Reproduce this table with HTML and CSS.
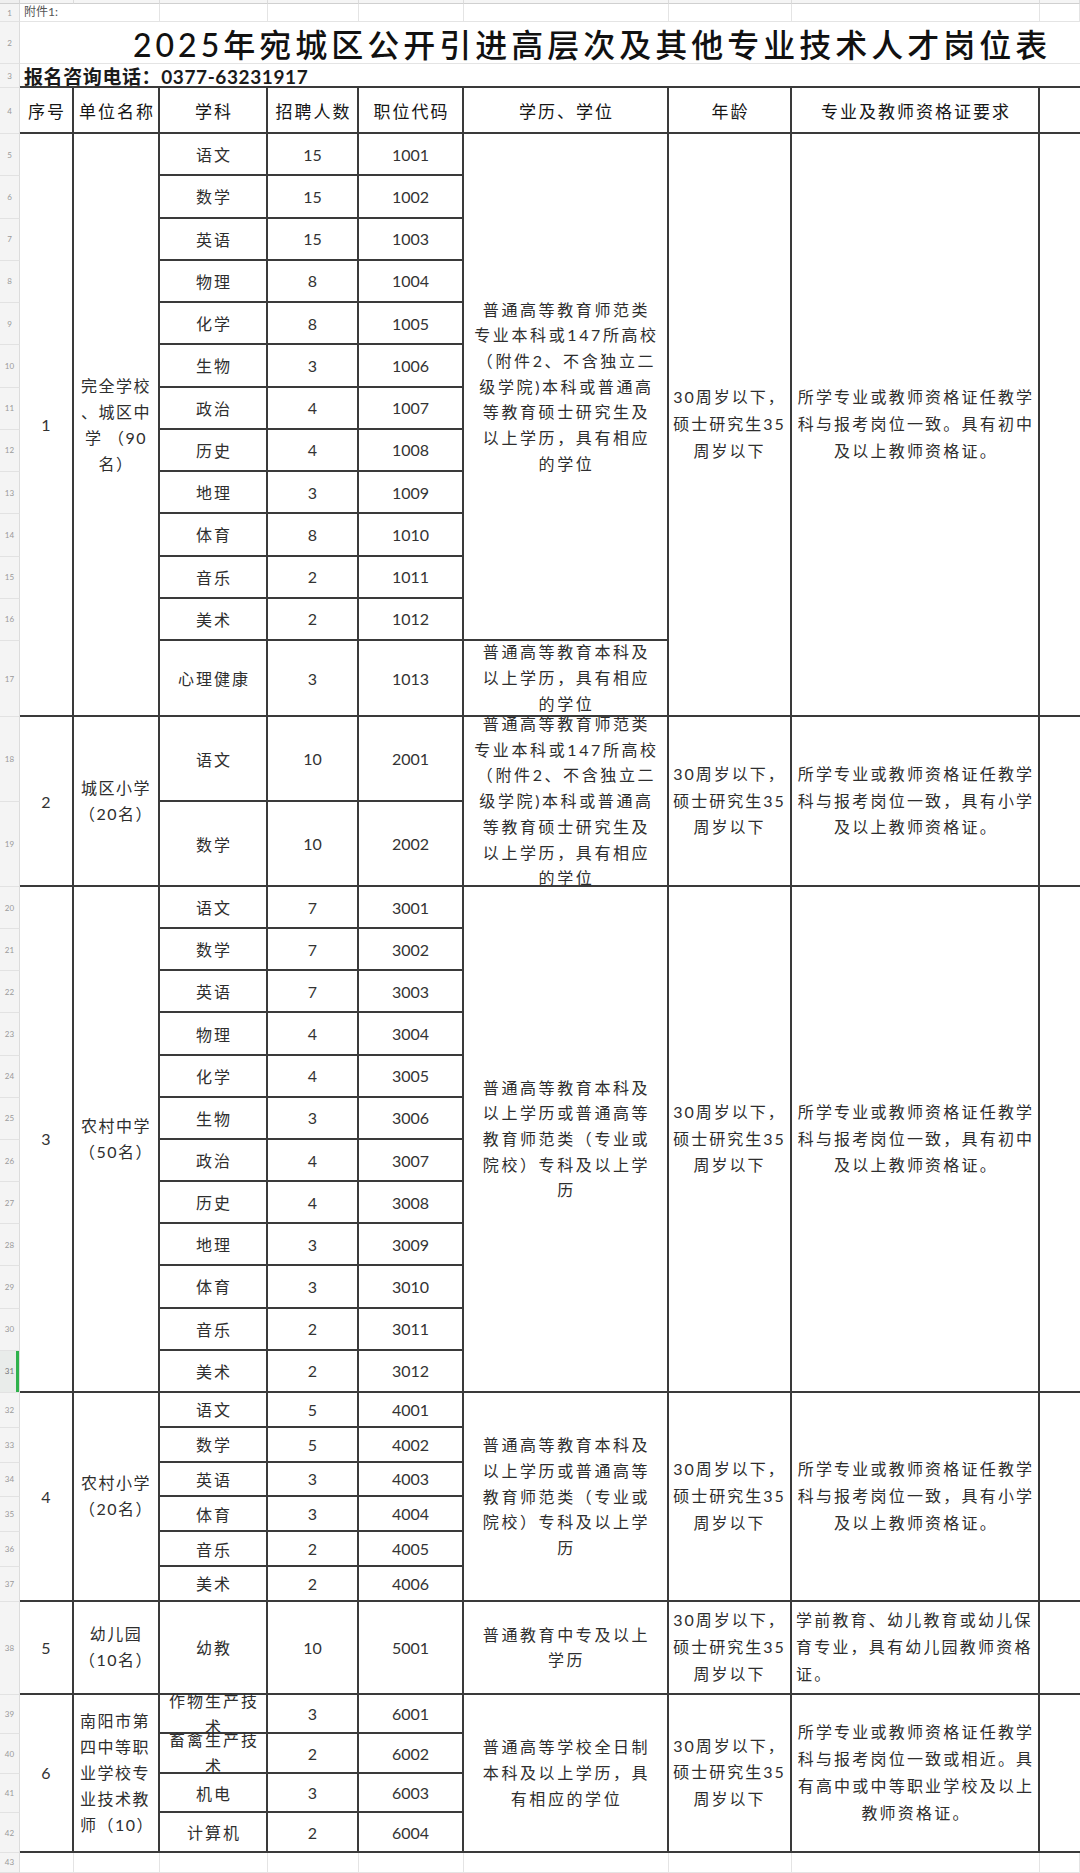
FILE: index.html
```html
<!DOCTYPE html>
<html lang="zh-CN">
<head>
<meta charset="utf-8">
<title>2025年宛城区公开引进高层次及其他专业技术人才岗位表</title>
<link rel="stylesheet" href="styles.css">
</head>
<body>
<div class="sheet">
  <!-- column header strip -->
  <div class="g0"></div>
  <div class="h0"></div><div class="h0"></div><div class="h0"></div><div class="h0"></div><div class="h0"></div><div class="h0"></div><div class="h0"></div><div class="h0"></div><div class="h0"></div>

  <!-- row 1 -->
  <div class="g">1</div>
  <div class="l cs2 note">附件1:</div>
  <div class="l"></div><div class="l"></div><div class="l"></div><div class="l"></div><div class="l"></div><div class="l"></div><div class="l"></div>

  <!-- row 2 -->
  <div class="g">2</div>
  <div class="l cs9 title">2025年宛城区公开引进高层次及其他专业技术人才岗位表</div>

  <!-- row 3 -->
  <div class="g">3</div>
  <div class="cs9 phone">报名咨询电话：0377-63231917</div>

  <!-- row 4 header -->
  <div class="g">4</div>
  <div class="c hd">序号</div>
  <div class="c hd">单位名称</div>
  <div class="c hd">学科</div>
  <div class="c hd">招聘人数</div>
  <div class="c hd">职位代码</div>
  <div class="c hd">学历、学位</div>
  <div class="c hd">年龄</div>
  <div class="c hd">专业及教师资格证要求</div>
  <div class="c last"></div>

  <!-- group 1 -->
  <div class="g">5</div>
  <div class="c rs13 num">1</div>
  <div class="c rs13 unit"><div class="t">完全学校<br>、城区中<br>学 （90<br>名）</div></div>
  <div class="c sub">语文</div><div class="c num">15</div><div class="c num">1001</div>
  <div class="c rs12 edu"><div class="t">普通高等教育师范类<br>专业本科或147所高校<br>（附件2、不含独立二<br>级学院)本科或普通高<br>等教育硕士研究生及<br>以上学历，具有相应<br>的学位</div></div>
  <div class="c rs13 age"><div class="t">30周岁以下，<br>硕士研究生35<br>周岁以下</div></div>
  <div class="c rs13 req"><div class="t">所学专业或教师资格证任教学<br>科与报考岗位一致。具有初中<br>及以上教师资格证。</div></div>
  <div class="c rs13 last"></div>

  <div class="g">6</div><div class="c sub">数学</div><div class="c num">15</div><div class="c num">1002</div>
  <div class="g">7</div><div class="c sub">英语</div><div class="c num">15</div><div class="c num">1003</div>
  <div class="g">8</div><div class="c sub">物理</div><div class="c num">8</div><div class="c num">1004</div>
  <div class="g">9</div><div class="c sub">化学</div><div class="c num">8</div><div class="c num">1005</div>
  <div class="g">10</div><div class="c sub">生物</div><div class="c num">3</div><div class="c num">1006</div>
  <div class="g">11</div><div class="c sub">政治</div><div class="c num">4</div><div class="c num">1007</div>
  <div class="g">12</div><div class="c sub">历史</div><div class="c num">4</div><div class="c num">1008</div>
  <div class="g">13</div><div class="c sub">地理</div><div class="c num">3</div><div class="c num">1009</div>
  <div class="g">14</div><div class="c sub">体育</div><div class="c num">8</div><div class="c num">1010</div>
  <div class="g">15</div><div class="c sub">音乐</div><div class="c num">2</div><div class="c num">1011</div>
  <div class="g">16</div><div class="c sub">美术</div><div class="c num">2</div><div class="c num">1012</div>
  <div class="g">17</div><div class="c sub">心理健康</div><div class="c num">3</div><div class="c num">1013</div>
  <div class="c edu clip"><div class="t">普通高等教育本科及<br>以上学历，具有相应<br>的学位</div></div>

  <!-- group 2 -->
  <div class="g">18</div>
  <div class="c rs2 num">2</div>
  <div class="c rs2 unit"><div class="t">城区小学<br>（20名）</div></div>
  <div class="c sub">语文</div><div class="c num">10</div><div class="c num">2001</div>
  <div class="c rs2 edu clip"><div class="t">普通高等教育师范类<br>专业本科或147所高校<br>（附件2、不含独立二<br>级学院)本科或普通高<br>等教育硕士研究生及<br>以上学历，具有相应<br>的学位</div></div>
  <div class="c rs2 age"><div class="t">30周岁以下，<br>硕士研究生35<br>周岁以下</div></div>
  <div class="c rs2 req"><div class="t">所学专业或教师资格证任教学<br>科与报考岗位一致，具有小学<br>及以上教师资格证。</div></div>
  <div class="c rs2 last"></div>
  <div class="g">19</div><div class="c sub">数学</div><div class="c num">10</div><div class="c num">2002</div>

  <!-- group 3 -->
  <div class="g">20</div>
  <div class="c rs12 num">3</div>
  <div class="c rs12 unit"><div class="t">农村中学<br>（50名）</div></div>
  <div class="c sub">语文</div><div class="c num">7</div><div class="c num">3001</div>
  <div class="c rs12 edu"><div class="t">普通高等教育本科及<br>以上学历或普通高等<br>教育师范类（专业或<br>院校）专科及以上学<br>历</div></div>
  <div class="c rs12 age"><div class="t">30周岁以下，<br>硕士研究生35<br>周岁以下</div></div>
  <div class="c rs12 req"><div class="t">所学专业或教师资格证任教学<br>科与报考岗位一致，具有初中<br>及以上教师资格证。</div></div>
  <div class="c rs12 last"></div>
  <div class="g">21</div><div class="c sub">数学</div><div class="c num">7</div><div class="c num">3002</div>
  <div class="g">22</div><div class="c sub">英语</div><div class="c num">7</div><div class="c num">3003</div>
  <div class="g">23</div><div class="c sub">物理</div><div class="c num">4</div><div class="c num">3004</div>
  <div class="g">24</div><div class="c sub">化学</div><div class="c num">4</div><div class="c num">3005</div>
  <div class="g">25</div><div class="c sub">生物</div><div class="c num">3</div><div class="c num">3006</div>
  <div class="g">26</div><div class="c sub">政治</div><div class="c num">4</div><div class="c num">3007</div>
  <div class="g">27</div><div class="c sub">历史</div><div class="c num">4</div><div class="c num">3008</div>
  <div class="g">28</div><div class="c sub">地理</div><div class="c num">3</div><div class="c num">3009</div>
  <div class="g">29</div><div class="c sub">体育</div><div class="c num">3</div><div class="c num">3010</div>
  <div class="g">30</div><div class="c sub">音乐</div><div class="c num">2</div><div class="c num">3011</div>
  <div class="g sel">31</div><div class="c sub">美术</div><div class="c num">2</div><div class="c num">3012</div>

  <!-- group 4 -->
  <div class="g">32</div>
  <div class="c rs6 num">4</div>
  <div class="c rs6 unit"><div class="t">农村小学<br>（20名）</div></div>
  <div class="c sub">语文</div><div class="c num">5</div><div class="c num">4001</div>
  <div class="c rs6 edu"><div class="t">普通高等教育本科及<br>以上学历或普通高等<br>教育师范类（专业或<br>院校）专科及以上学<br>历</div></div>
  <div class="c rs6 age"><div class="t">30周岁以下，<br>硕士研究生35<br>周岁以下</div></div>
  <div class="c rs6 req"><div class="t">所学专业或教师资格证任教学<br>科与报考岗位一致，具有小学<br>及以上教师资格证。</div></div>
  <div class="c rs6 last"></div>
  <div class="g">33</div><div class="c sub">数学</div><div class="c num">5</div><div class="c num">4002</div>
  <div class="g">34</div><div class="c sub">英语</div><div class="c num">3</div><div class="c num">4003</div>
  <div class="g">35</div><div class="c sub">体育</div><div class="c num">3</div><div class="c num">4004</div>
  <div class="g">36</div><div class="c sub">音乐</div><div class="c num">2</div><div class="c num">4005</div>
  <div class="g">37</div><div class="c sub">美术</div><div class="c num">2</div><div class="c num">4006</div>

  <!-- group 5 -->
  <div class="g">38</div>
  <div class="c num">5</div>
  <div class="c unit"><div class="t">幼儿园<br>（10名）</div></div>
  <div class="c sub">幼教</div><div class="c num">10</div><div class="c num">5001</div>
  <div class="c edu"><div class="t">普通教育中专及以上<br>学历</div></div>
  <div class="c age"><div class="t">30周岁以下，<br>硕士研究生35<br>周岁以下</div></div>
  <div class="c req left"><div class="t">学前教育、幼儿教育或幼儿保<br>育专业，具有幼儿园教师资格<br>证。</div></div>
  <div class="c last"></div>

  <!-- group 6 -->
  <div class="g">39</div>
  <div class="c rs4 num">6</div>
  <div class="c rs4 unit left"><div class="t">南阳市第<br>四中等职<br>业学校专<br>业技术教<br>师（10）</div></div>
  <div class="c sub tight"><div class="t">作物生产技<br>术</div></div><div class="c num">3</div><div class="c num">6001</div>
  <div class="c rs4 edu"><div class="t">普通高等学校全日制<br>本科及以上学历，具<br>有相应的学位</div></div>
  <div class="c rs4 age"><div class="t">30周岁以下，<br>硕士研究生35<br>周岁以下</div></div>
  <div class="c rs4 req"><div class="t">所学专业或教师资格证任教学<br>科与报考岗位一致或相近。具<br>有高中或中等职业学校及以上<br>教师资格证。</div></div>
  <div class="c rs4 last"></div>
  <div class="g">40</div><div class="c sub tight"><div class="t">畜禽生产技<br>术</div></div><div class="c num">2</div><div class="c num">6002</div>
  <div class="g">41</div><div class="c sub">机电</div><div class="c num">3</div><div class="c num">6003</div>
  <div class="g">42</div><div class="c sub">计算机</div><div class="c num">2</div><div class="c num">6004</div>

  <!-- row 43 -->
  <div class="g">43</div>
  <div class="l"></div><div class="l"></div><div class="l"></div><div class="l"></div><div class="l"></div><div class="l"></div><div class="l"></div><div class="l"></div><div class="l"></div>
</div>
</body>
</html>
```

FILE: styles.css
```css
html, body {
  margin: 0;
  padding: 0;
  background: #ffffff;
}

body {
  width: 1080px;
  height: 1873px;
  overflow: hidden;
  font-family: "Liberation Sans Narrow", Lato, "Noto Sans CJK SC", sans-serif;
  color: #2b2b2b;
}

.sheet {
  display: grid;
  grid-template-columns: 20px 54px 86px 108px 91px 105px 205px 123px 248px 40px;
  grid-template-rows:
    4px 18px 42px 24px 46px
    repeat(12, 42.25px)
    76px 85px 85px
    repeat(12, 42.17px)
    repeat(6, 34.83px)
    93px
    repeat(4, 39.5px)
    20px;
}

.sheet > div {
  box-sizing: border-box;
  min-width: 0;
  min-height: 0;
}

/* spans */
.cs2 { grid-column: span 2; }
.cs9 { grid-column: span 9; }
.rs2 { grid-row: span 2; }
.rs4 { grid-row: span 4; }
.rs6 { grid-row: span 6; }
.rs12 { grid-row: span 12; }
.rs13 { grid-row: span 13; }

/* gutter */
.g0 {
  background: #efefef;
  border-right: 1px solid #d6d6d6;
  border-bottom: 1px solid #d0d0d0;
}
.h0 {
  background: #f5f5f5;
  border-right: 1px solid #dcdcdc;
  border-bottom: 1px solid #d0d0d0;
}
.g {
  background: #f4f4f4;
  border-right: 1px solid #dcdcdc;
  border-bottom: 1px solid #e2e2e2;
  font-family: Lato, "Noto Sans CJK SC", sans-serif;
  font-size: 8px;
  color: #9a9a9a;
  display: flex;
  align-items: center;
  justify-content: center;
}
.g.sel {
  background: #e9ecea;
  box-shadow: inset -3px 0 0 #2fb24c;
  color: #777;
}

/* light spreadsheet cells */
.l {
  border-right: 1px solid #e4e4e4;
  border-bottom: 1px solid #e4e4e4;
}

.note {
  font-size: 12px;
  color: #555;
  padding-left: 4px;
  display: flex;
  align-items: flex-start;
  line-height: 16px;
}

.title {
  display: flex;
  align-items: center;
  padding-left: 113px;
  font-size: 32px;
  font-weight: 500;
  letter-spacing: 4px;
  color: #111;
  white-space: nowrap;
  border-right: none;
}

.phone {
  display: flex;
  align-items: center;
  padding-left: 4px;
  font-size: 19px;
  font-weight: 700;
  letter-spacing: 0.6px;
  color: #1a1a1a;
  white-space: nowrap;
  border-bottom: 2px solid #3a3a3a;
}

/* table cells */
.c {
  border-right: 2px solid #3a3a3a;
  border-bottom: 2px solid #3a3a3a;
  display: flex;
  align-items: center;
  justify-content: center;
  text-align: center;
  font-size: 16px;
  white-space: nowrap;
}

.c.last {
  border-right: none;
}

.c.clip {
  overflow: hidden;
}

.t {
  white-space: nowrap;
}

.hd {
  font-size: 17px;
  letter-spacing: 2px;
  color: #151515;
  padding-left: 2px;
}

.num {
  font-size: 16px;
  color: #333;
}

.sub {
  font-size: 16px;
  letter-spacing: 2px;
  padding-left: 2px;
  color: #2e2e2e;
}

.sub.tight .t {
  line-height: 26px;
}

.unit {
  font-size: 16px;
  letter-spacing: 1.5px;
  line-height: 26px;
  color: #2e2e2e;
}

.unit.left {
  justify-content: flex-start;
  text-align: left;
  padding-left: 6px;
}

.edu {
  font-size: 16px;
  letter-spacing: 2.6px;
  line-height: 25.7px;
  padding-left: 2px;
  color: #2e2e2e;
}

.age {
  font-size: 16px;
  letter-spacing: 2px;
  line-height: 26.7px;
  color: #2e2e2e;
}

.req {
  font-size: 16px;
  letter-spacing: 2.2px;
  line-height: 26.7px;
  padding-left: 2px;
  color: #2e2e2e;
}

.req.left {
  justify-content: flex-start;
  text-align: left;
  padding-left: 4px;
}
```
